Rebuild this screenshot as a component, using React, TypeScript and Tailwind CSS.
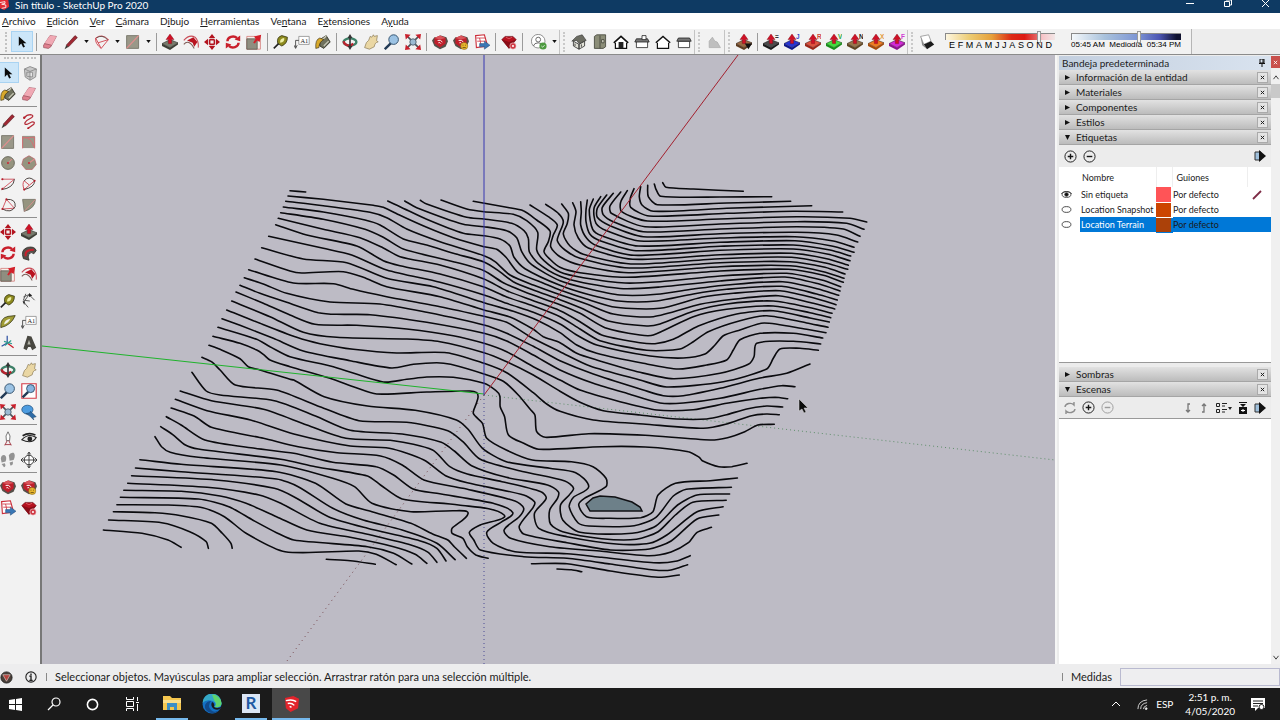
import type { ReactNode } from 'react'

type Point = [number, number]

type Contour = { w?: string; e?: string; s?: string }

const contours: Contour[] = [
  { w: '150,62 197,66' },
  { e: '308,38 318,52 400,57 550,64' },
  { e: '283,42 288,58 302,79 480,81 635,80' },
  { e: '263,46 265,80 292,104 500,99 692,94' },
  { e: '242,50 238,80 246,105 280,124 500,115 755,107' },
  { e: '222,56 211,85 212,112 268,138 500,130 700,124 848,126' },
  { e: '202,62 182,96 185,125 262,153 480,147 710,140 870,145 920,156' },
  { e: '182,66 150,108 154,130 255,170 480,162 710,155 860,160 912,178' },
  { e: '160,70 127,112 130,134 160,155 250,185 480,177 710,170 850,177 900,199' },
  { e: '140,75 112,115 112,142 150,167 250,200 480,191 710,187 830,195 893,216' },
  { e: '122,80 102,115 108,160 140,182 240,213 480,204 705,200 820,213 882,232' },
  { e: '100,87 88,120 98,178 125,197 235,228 480,217 705,212 815,228 882,247' },
  { e: '82,90 78,120 78,155 90,193 120,212 228,242 480,229 700,225 810,240 872,258' },
  { e: '62,95 64,125 62,165 80,205 110,227 222,256 480,241 700,237 805,253 870,272' },
  { e: '38,98 48,125 42,165 55,204 85,234 218,268 480,254 695,250 800,266 865,286' },
  { e: '5,102 25,130 22,160 10,192 30,228 70,253 212,282 480,266 695,262 800,280 863,298' },
  { e: '-43,103 -5,130 10,155 -2,190 -8,212 15,240 60,265 208,294 480,278 690,275 795,292 855,312' },
  { e: '-90,105 -35,140 -8,165 -20,195 -28,230 0,260 60,285 205,308 480,290 690,287 790,305 852,325' },
  { w: '700,94 800,112 850,122 890,150 930,183 925,215 912,245 930,268', e: '0,292 60,308 200,322 480,303 685,298 790,316 850,337' },
  { w: '603,90 680,117 732,125 820,133 860,152 893,187 890,240 912,272', e: '0,306 70,323 195,339 300,335 480,318 680,310 785,330 842,350' },
  { w: '541,91 560,102 680,142 732,147 815,160 852,182 865,205 868,245 895,280', e: '0,319 70,338 190,356 300,351 480,333 675,321 780,343 840,363' },
  { w: '494,93 530,113 670,163 732,170 800,182 830,203 845,245 875,284', e: '0,332 80,355 180,375 290,373 400,357 500,345 668,335 775,357 836,376' },
  { w: '443,93 480,110 560,148 670,190 732,197 780,207 810,228 822,262 855,296', e: '0,346 80,372 175,393 290,393 400,372 500,358 665,349 770,372 832,390' },
  { w: '144,78 250,88 400,106 430,112 480,136 560,172 640,203 732,230 770,238 798,262 835,308', e: '-60,335 0,360 80,387 168,412 300,415 425,382 520,370 660,362 765,385 828,404' },
  { w: '137,94 250,107 390,127 440,143 500,177 600,215 732,257 765,275 810,315', e: '-80,345 0,374 80,402 160,432 280,440 420,403 520,388 655,377 760,400 824,417' },
  { w: '130,111 250,126 375,150 420,165 490,207 560,225 640,250 732,276 775,302 820,335', e: '-80,360 0,389 70,417 145,453 260,468 300,462 400,424 500,402 640,393 755,414 816,430' },
  { w: '122,128 250,148 375,178 430,202 490,237 640,275 732,302 790,338', e: '-100,368 0,404 60,430 135,473 240,495 280,495 400,440 500,418 640,408 750,428 812,443' },
  { w: '115,145 250,178 360,203 430,234 480,260 600,285 732,327 800,362', e: '-80,392 0,422 60,455 125,495 240,518 285,521 340,508 415,468 530,432 640,422 750,444 808,456' },
  { w: '107,164 200,195 350,228 430,272 480,287 600,312 732,351 800,381', e: '-80,408 0,440 60,477 120,512 260,541 360,537 400,515 445,485 540,452 620,437 740,459 804,472' },
  { w: '86,199 250,235 335,255 440,300 600,337 732,375 800,400', e: '-80,427 0,462 50,495 110,525 270,558 370,564 435,552 465,525 490,497 540,480 612,459 740,478 798,488' },
  { w: '65,233 190,267 320,278 440,325 580,350 732,398 820,424', e: '-70,450 0,488 50,525 110,550 250,580 355,597 440,585 500,570 520,540 540,509 600,490 700,490 788,504' },
  { w: '45,267 150,303 185,309 310,305 370,322 440,350 600,380 732,420 810,441', e: '-80,478 -50,500 0,518 50,550 110,570 240,607 340,626 480,610 565,583 582,560 590,520 700,514 782,522' },
  { w: '26,299 160,339 280,341 340,358 440,380 600,410 732,439 800,457', e: '-90,500 0,545 90,588 240,630 320,651 490,635 620,597 640,565 660,537 720,535 775,541' },
  { w: '13,323 70,342 140,370 270,396 420,402 560,427 732,465 800,490', e: '-80,529 0,572 100,612 250,660 310,677 370,677 480,655 600,624 680,610 750,582' },
  { w: '0,346 60,370 140,397 235,428 290,433 390,434 560,457 732,490 800,513', e: '-80,555 0,600 100,640 200,670 300,699 370,699 480,685 600,658 665,647 705,650' },
  { w: '-12,366 70,400 150,435 225,463 350,466 500,477 640,497 732,520 800,545', e: '-80,590 0,630 60,660 180,695 290,720 400,719 500,700 600,685 645,682 683,686' },
  { w: '-25,393 90,440 190,487 290,502 500,507 600,515 732,548 800,575', e: '-80,615 0,664 60,697 130,722 240,735 350,747 440,747 500,734 560,717 620,708 668,711' },
  { w: '-40,420 60,460 170,502 240,521 340,538 470,549 620,548 732,580 800,608', e: '-80,668 -40,702 0,724 100,750 250,762 430,775 500,762 575,737 620,732 658,734' },
  { w: '-54,446 0,466 100,505 190,543 330,572 455,594 520,583 590,578 632,583 732,612 790,634 835,675', s: '1015,118 1026,135 1030,185 1050,202 1150,191 1280,196 1430,210 1470,203 1510,185 1540,165 1578,163' },
  { w: '-66,472 50,508 90,530 150,560 280,590 430,636 500,628 560,621 640,622 732,640 768,662', s: '945,78 946,110 956,140 965,195 1000,220 1035,238 1180,230 1280,231 1380,245 1405,262 1412,272 1450,290 1480,290 1515,280' },
  { w: '-81,499 0,520 50,540 70,553 90,570 150,590 270,625 340,650 410,672 560,666 690,663 710,668', s: '895,80 891,100 884,130 905,160 915,205 960,240 1020,270 1110,275 1160,290 1190,325 1190,350 1140,385 1127,405 1145,440 1200,445 1270,443 1298,425 1310,375 1350,340 1430,332 1493,324' },
  { w: '-93,526 -60,538 0,566 25,590 60,600 150,628', s: '470,30 540,80 640,108 750,121 845,150 872,178 905,235 960,275 1060,295 1120,308 1150,350 1115,382 1105,410 1125,458 1150,468 1255,467 1305,442 1345,378 1375,358 1479,352' },
  { s: '258,-38 280,-25 300,0 335,45 430,60 530,110 620,152 730,157 825,182 860,215 900,268 1000,305 1095,333 1115,355 1105,375 1085,405 1090,450 1130,487 1250,490 1305,468 1355,405 1400,375 1475,372' },
  { s: '235,7 268,63 300,75 425,92 520,138 600,181 720,192 810,217 840,243 880,287 960,322 1055,345 1080,365 1078,385 1060,420 1062,462 1090,485 1180,506 1260,508 1310,485 1350,435 1390,397 1467,391' },
  { s: '208,63 280,92 400,118 500,165 590,205 700,212 790,240 830,290 870,312 950,335 1040,365 1052,385 1025,430 1035,475 1100,500 1220,523 1290,520 1330,495 1400,425 1460,410' },
  { s: '197,88 270,122 370,150 470,192 600,228 690,235 770,270 820,317 870,338 1000,375 1025,395 1022,412 990,468 1000,492 1100,518 1200,540 1290,537 1340,513 1400,447 1450,435' },
  { s: '187,114 240,138 280,172 400,205 480,230 570,248 670,258 720,285 770,330 860,355 980,393 1000,415 990,440 955,480 970,505 1060,530 1180,544 1290,557 1340,546 1380,518 1400,487 1433,472' },
  { s: '176,140 210,165 265,210 380,235 470,250 560,277 660,290 700,315 745,357 800,370 930,400 975,428 950,455 915,487 930,520 980,545 1100,551 1180,562 1300,578 1350,574 1384,557' },
  { s: '163,170 190,193 220,225 250,237 440,268 520,290 640,318 670,345 720,387 850,405 955,435 900,465 875,487 885,510 900,540 1000,560 1100,565 1200,582 1300,600 1340,600 1378,584' },
  { s: '150,200 165,230 185,247 250,262 440,285 560,325 610,350 650,400 740,425 840,422 872,430 835,475 835,490 860,505 870,530 890,555 918,565' },
  { s: '115,269 210,283 430,305 520,340 590,402 650,425 740,460 790,492 825,510 840,530 868,565' },
  { s: '105,294 210,305 430,327 480,350 560,415 630,450 720,480 800,520 842,569' },
  { s: '96,317 290,330 425,355 470,380 550,440 640,475 760,512 800,535 821,573' },
  { s: '87,340 270,352 390,375 440,400 530,460 640,493 740,525 780,547 800,577' },
  { s: '78,361 210,364 300,378 360,400 430,440 500,480 600,502 700,530 750,553 777,580' },
  { s: '70,382 250,387 320,410 375,450 430,488 470,510 640,530 700,550 742,582' },
  { s: '62,404 180,405 260,413 310,440 360,490 450,545 620,543 660,553 706,584' },
  { s: '54,425 150,428 210,437 280,460 305,490 325,520 328,535' },
  { s: '43,450 165,458 230,485 268,515 273,535' },
  { s: '31,480 120,490 180,510 210,532' },
  { s: '545,568 600,572 658,583' },
  { s: '1018,581 1100,581 1200,603 1310,622 1359,615' },
  { s: '1077,597 1110,599 1134,605' },
]

const parse = (text = ''): Point[] =>
  text ? text.split(' ').map((pair) => pair.split(',').map(Number) as Point) : []

const contourPath = ({ w, e, s }: Contour) => {
  const pts: Point[] = [
    ...parse(w).map(([x, y]): Point => [240 + x / 3, 170 + y / 3]),
    ...parse(e).map(([x, y]): Point => [560 + x / 3, 170 + y / 3]),
    ...parse(s).map(([x, y]): Point => [90 + x / 2.306, 370 + y / 3]),
  ]
  let d = `M${pts[0][0].toFixed(1)} ${pts[0][1].toFixed(1)}`
  for (let i = 0; i < pts.length - 1; i++) {
    const p0 = pts[i - 1] ?? pts[i]
    const p1 = pts[i]
    const p2 = pts[i + 1]
    const p3 = pts[i + 2] ?? p2
    // handles never reach further than a quarter of the segment
    const len = Math.hypot(p2[0] - p1[0], p2[1] - p1[1])
    const handle = (a: Point, b: Point): Point => {
      const dist = Math.hypot(b[0] - a[0], b[1] - a[1]) || 1
      return [((b[0] - a[0]) / dist) * len * 0.25, ((b[1] - a[1]) / dist) * len * 0.25]
    }
    const h1 = handle(p0, p2)
    const h2 = handle(p1, p3)
    const c = [p1[0] + h1[0], p1[1] + h1[1], p2[0] - h2[0], p2[1] - h2[1], p2[0], p2[1]]
    d += `C${c.map((n) => n.toFixed(1)).join(' ')}`
  }
  return d
}

const push = (color: string, dark: string, letter?: string, letterColor?: string) => (
  <>
    <path d="M0 12l10-5 10 4-10 6z" fill={color} stroke="#222" strokeWidth=".6" />
    <path d="M0 12v3l10 5 10-7v-2l-10 6z" fill={dark} />
    <path d="M8 12V7H5l5-7 5 7h-3v5z" fill="#cf1126" stroke="#7c0a16" strokeWidth=".5" />
    {letter && (
      <text x="15" y="6" fontSize="8" fontWeight="700" fontFamily="Liberation Sans, sans-serif" fill={letterColor}>
        {letter}
      </text>
    )}
  </>
)

const gem = (
  <>
    <path d="M1 7l4-4h10l4 4-9 11z" fill="#b5121f" stroke="#5d0810" strokeWidth=".7" />
    <path d="M1 7l9 3 9-3-9 11z" fill="#8a0c17" />
    <path d="M6 4l4 2 4-2" stroke="#e86a72" strokeWidth=".9" fill="none" />
  </>
)

const warehouse = (
  <>
    <path d="M0 8l3-4h3l5-2 7 2 2 5-3 7-7 3-7-4z" fill="#55504a" />
    <path d="M3 5l7-3 7 3v7l-7 5-7-5z" fill="#bf1f2b" />
    <path d="M3 5l7 2 7-2-7-3z" fill="#d9555c" />
    <path d="M7 8q4-1 6 2M8 11q2-1 3 1" stroke="#fff" fill="none" strokeWidth="1.200" />
  </>
)

const icons: Record<string, ReactNode> = {
  select: <path d="M6 3v12l3-3 2.500 5 2.200-1L11.500 11.500H15.500z" fill="#0b0b0b" />,
  eraser: (
    <>
      <path d="M2 14L10 2l8 1-7 13-3 2-6-1z" fill="#e0808f" stroke="#8e4451" strokeWidth=".8" />
      <path d="M10 2l8 1-6 11-9-2z" fill="#f0a9b4" />
      <path d="M3 12l9 2" stroke="#8e4451" strokeWidth=".8" />
    </>
  ),
  pencil: (
    <>
      <path d="M4 14L15 2l3 2.500L7 16z" fill="#a02833" stroke="#521018" strokeWidth=".7" />
      <path d="M4 14l-2 5 5-3z" fill="#3c3732" />
    </>
  ),
  freehand: (
    <>
      <path d="M4 6q3-4 8-4 5 1 1 4-6 3-8 6-1 3 3 2l6-3q4 0 2 3l-7 5" fill="none" stroke="#b52c38" strokeWidth="1.600" />
      <circle cx="4" cy="6" r="1.500" fill="#b51d2b" />
      <circle cx="9" cy="19" r="1.300" fill="#b51d2b" />
    </>
  ),
  arcs: (
    <>
      <path d="M2 5Q10-1 18 7L9 18Q1 12 2 5zM2 5l7 13M5 11L18 7" fill="none" stroke="#d24d58" strokeWidth="1.200" />
      <path d="M3 5Q10 0 17 7" fill="none" stroke="#54433f" />
    </>
  ),
  rect: (
    <>
      <path d="M2 2h15v16H2z" fill="#9a9889" stroke="#6d6c60" />
      <path d="M2 18L17 2" stroke="#e08e8e" strokeWidth="1.600" />
    </>
  ),
  rotrect: (
    <>
      <path d="M2 3h15v14H2z" fill="#9a9889" stroke="#8a8778" />
      <path d="M2 5l15-1v14M2 3v15M4 4q9 1 12 12" stroke="#d46f73" fill="none" strokeWidth="1.200" />
    </>
  ),
  circle: (
    <>
      <circle cx="10" cy="10" r="8" fill="#95947f" stroke="#5d5c50" />
      <path d="M10 10l5-5" stroke="#e28b8e" strokeWidth="1.300" />
      <circle cx="10" cy="10" r="1.300" fill="#c52a37" />
    </>
  ),
  polygon: (
    <>
      <path d="M10 1l7 4 2 7-5 6H6l-5-6 2-7z" fill="#95947f" stroke="#b8666a" />
      <path d="M10 10l7-5" stroke="#e28b8e" strokeWidth="1.300" />
      <circle cx="10" cy="10" r="1.300" fill="#c52a37" />
    </>
  ),
  arc: (
    <>
      <path d="M2 4h16M2 17L18 4" stroke="#cf4956" fill="none" strokeWidth="1.100" />
      <path d="M18 4Q17 15 2 17" stroke="#49413e" fill="none" strokeWidth="1.200" />
      <circle cx="3" cy="4" r="1.300" fill="#b51d2b" />
      <circle cx="3" cy="16" r="1.300" fill="#b51d2b" />
    </>
  ),
  arc2: (
    <>
      <path d="M4 17L17 6M10 11L4 6M4 17q-3-7 0-11" stroke="#cf4956" fill="none" strokeWidth="1.200" />
      <path d="M4 6Q10-1 17 6 17 14 4 17" stroke="#49413e" fill="none" strokeWidth="1.200" />
      <circle cx="4" cy="17" r="1.300" fill="#b51d2b" />
      <circle cx="17" cy="6" r="1.300" fill="#b51d2b" />
    </>
  ),
  arc3: (
    <>
      <path d="M8 3l10 11L3 15z" stroke="#cf4956" fill="none" strokeWidth="1.100" />
      <path d="M8 3q12-1 11 9-5 9-16 3" stroke="#49413e" fill="none" strokeWidth="1.200" />
      <circle cx="8" cy="3" r="1.300" fill="#b51d2b" />
      <circle cx="3" cy="15" r="1.300" fill="#b51d2b" />
    </>
  ),
  pie: (
    <>
      <path d="M2 3h16q0 11-14 15z" fill="#95947f" stroke="#6d6c60" />
      <path d="M18 3L4 18" stroke="#e28b8e" />
    </>
  ),
  push: push('#777a6b', '#3d3f36'),
  move: <path d="M10 0l4 5H6zM10 20l4-5H6zM0 10l5-4v8zM20 10l-5-4v8zM7 6h6v2H7zM7 12h6v2H7zM6 7h2v6H6zM12 7h2v6h-2z" fill="#b3141f" />,
  rotate: (
    <>
      <path d="M3 9a7 6 0 0112-4M17 11a7 6 0 01-12 4" fill="none" stroke="#c9202c" strokeWidth="3" />
      <path d="M12 7l7-5v7zM8 13l-7 5v-7z" fill="#c9202c" />
    </>
  ),
  scale: (
    <>
      <path d="M1 3h17v16H1z" fill="#f8efea" stroke="#d37b78" />
      <path d="M1 6h13v13H1z" fill="#8f8e80" stroke="#5d5c50" />
      <path d="M9 11l3-5-2-3 9-2-2 9-3-2-3 4z" fill="#d3202a" />
    </>
  ),
  offset: (
    <>
      <path d="M1 8Q8 0 15 4q5 5 4 13" stroke="#c94c57" fill="none" strokeWidth="1.300" />
      <path d="M1 13q6-7 13 5" stroke="#7d5a55" fill="none" strokeWidth="1.300" />
      <path d="M5 8l8-4 5 6-4 6-2-5z" fill="#b9121f" />
    </>
  ),
  followme: (
    <>
      <path d="M3 17Q-1 6 8 3q9-2 11 4l-3 4q-3-3-6 0-2 4 0 8z" fill="#55504a" stroke="#2c2926" />
      <path d="M6 14Q4 6 16 6" stroke="#c9202c" strokeWidth="2.600" fill="none" />
    </>
  ),
  tape: (
    <>
      <path d="M6 12Q4 4 11 2l7 2q0 8-7 11z" fill="#8d8a1e" stroke="#34330f" />
      <path d="M9 11q-1-5 5-6 1 5-5 6z" fill="#eeefa5" />
      <path d="M7 12l-6 6" stroke="#222" strokeWidth="2" />
    </>
  ),
  dimension: (
    <>
      <path d="M3 5l7-3 7 7M4 12l5 6M6 1l-3 8 8 1M10 2L3 12" stroke="#565656" strokeWidth="1.200" fill="none" />
      <path d="M10 0l4 3-4 2zM2 10l3 1-1 4z" fill="#222" />
    </>
  ),
  protractor: (
    <>
      <path d="M1 17Q0 5 10 3l9-1Q14 14 1 17z" fill="#a09c35" stroke="#34330f" />
      <path d="M5 13q1-6 8-7-2 5-8 7z" fill="#f2f2e9" />
    </>
  ),
  text: (
    <>
      <path d="M6 3h13v10H6z" fill="#fff" stroke="#8b8b8b" />
      <text x="8" y="11" fontSize="8" fontFamily="Liberation Serif, serif" fill="#222">A1</text>
      <path d="M6 8H2v9M0 14l2 4 2-4" stroke="#333" fill="none" />
    </>
  ),
  axes: (
    <>
      <path d="M9 10V1M9 10L2 14" stroke="#2a4ea0" strokeWidth="1.500" />
      <path d="M9 10l8 6" stroke="#c9202c" strokeWidth="1.600" />
      <path d="M5 8l10 3M6 13l8-6" stroke="#2c9c8e" strokeWidth="1.500" />
    </>
  ),
  text3d: (
    <>
      <path d="M3 17L8 1l5 1 6 14-5 3-2-4H9l-2 4z" fill="#484740" />
      <path d="M8 12l2-6 2 6z" fill="#b8b8ad" />
    </>
  ),
  paint: (
    <>
      <path d="M6 7l8-5 5 8-8 8-5-3z" fill="#6f715e" stroke="#282820" />
      <path d="M6 7q5 0 8-5M11 15l6-6" stroke="#c9c9b8" strokeWidth="1.500" fill="none" />
      <path d="M1 18Q0 7 6 5l5 2q-6 3-6 10z" fill="#d8a92b" stroke="#3b2f10" strokeWidth=".8" />
    </>
  ),
  component: <path d="M3 5l7-3 8 3-1 10-7 4-6-4zM3 5l7 3v11M10 8l8-3M6 9v5l7 1V9z" fill="#c9c9c9" stroke="#8f8f8f" strokeWidth="1.200" />,
  orbit: (
    <>
      <ellipse cx="10" cy="10" rx="8" ry="4.500" fill="none" stroke="#3d8067" strokeWidth="3" />
      <path d="M2 9q1 5 8 6l4-3" fill="none" stroke="#b9222e" strokeWidth="3" />
      <path d="M10 0l3 5h-2v10h2l-3 5-3-5h2V5H7z" fill="#333" />
    </>
  ),
  pan: <path d="M2 17q2-8 5-9l2-5 2 1 2-3 1 2 4-1-1 6 2 2q-4 0-5 6l-6 3z" fill="#ead7a4" stroke="#83714a" strokeWidth=".8" />,
  zoom: (
    <>
      <path d="M9 11l-8 8" stroke="#223a55" strokeWidth="3" />
      <circle cx="12" cy="7" r="6" fill="#9cc3e4" stroke="#35546f" strokeWidth="1.200" />
    </>
  ),
  zoomwin: (
    <>
      <path d="M1 1h18v18H1z" fill="#fff" stroke="#d43a46" strokeWidth="1.400" />
      <path d="M9 11l-7 7" stroke="#223a55" strokeWidth="3" />
      <circle cx="12" cy="7" r="5" fill="#86b4de" stroke="#35546f" strokeWidth="1.200" />
    </>
  ),
  extents: (
    <>
      <path d="M3 3l14 14M17 3L3 17" stroke="#4d5158" strokeWidth="2" />
      <path d="M0 0l7 1-6 6zM20 0l-7 1 6 6zM0 20l7-1-6-6zM20 20l-7-1 6-6z" fill="#c9202c" />
      <circle cx="10" cy="10" r="4" fill="#9bbbd3" stroke="#43525e" />
    </>
  ),
  previous: (
    <>
      <ellipse cx="8" cy="7" rx="7" ry="5.500" fill="#4d9ce0" stroke="#225382" />
      <path d="M12 9l7 7-4 1 1 3-5-5-5-3 5-1z" fill="#2e6ba6" stroke="#173a5d" strokeWidth=".6" />
    </>
  ),
  camera: (
    <>
      <path d="M10 1q-4 5-2 11h4q2-6-2-11z" fill="#fff" stroke="#555" />
      <path d="M9 12l-3 6M11 12l3 6M6 17h8" stroke="#a33f49" strokeWidth="1.200" />
    </>
  ),
  look: (
    <>
      <path d="M1 11q8-9 18-3-5 9-18 3z" fill="#e8e8e8" stroke="#222" strokeWidth="1.400" />
      <circle cx="11" cy="10" r="3" fill="#222" />
      <path d="M2 6q8-5 16-1" stroke="#222" strokeWidth="2" fill="none" />
    </>
  ),
  walk: <path d="M1 8q1-5 5-4 3 2 1 8l-5 1zM2 15l4-1q2 4-1 5zM11 4q2-4 6-3 3 3 0 9l-5 1zM12 13l4-1q1 5-3 5z" fill="#939393" />,
  section: (
    <>
      <circle cx="10" cy="10" r="6" fill="#fff" stroke="#333" strokeWidth="1.200" />
      <path d="M0 10h20M10 1v18M3 7l-3 3 3 3M17 7l3 3-3 3M8 3l2-3 2 3M8 17l2 3 2-3" stroke="#222" fill="none" />
    </>
  ),
  warehouse,
  extensions: (
    <>
      {warehouse}
      <circle cx="14" cy="15" r="4.500" fill="#e7b62d" stroke="#70540f" strokeWidth=".6" />
      <path d="M12 14h1M15 14h1M12 17h4" stroke="#5d440a" />
    </>
  ),
  layout: (
    <>
      <path d="M2 2l11-1 4 14-14 2z" fill="#fff" stroke="#cc2f3b" strokeWidth="1.400" />
      <path d="M3 5h11M7 5l2 10M4 9h11" stroke="#cc2f3b" />
      <path d="M7 12h6V9l7 5-7 5v-3H7z" fill="#3977b5" stroke="#1f4a78" strokeWidth=".6" />
    </>
  ),
  manager: (
    <>
      {gem}
      <circle cx="15" cy="15" r="4" fill="#cf3a45" stroke="#fff" strokeWidth=".6" />
      <circle cx="15" cy="15" r="1.300" fill="#fff" />
    </>
  ),
  account: (
    <>
      <circle cx="9" cy="9" r="8.500" fill="#fff" stroke="#777" />
      <circle cx="9" cy="7" r="3" fill="none" stroke="#666" strokeWidth="1.200" />
      <path d="M3 15q1-4 6-4t6 4" fill="none" stroke="#666" strokeWidth="1.200" />
      <circle cx="15" cy="15" r="4.500" fill="#4c9a3f" />
      <path d="M13 15l1.500 1.500L17 14" stroke="#fff" fill="none" />
    </>
  ),
  iso: (
    <>
      <path d="M3 9l7 4v6l-7-4zM10 13l7-4v6l-7 4z" fill="#e2e2d8" stroke="#2b2b2b" />
      <path d="M1 9l6-6 7-2 5 7-9 4-3-4z" fill="#6c6d63" stroke="#2b2b2b" strokeWidth=".7" />
      <path d="M5 12v3M13 13v3" stroke="#2b2b2b" />
    </>
  ),
  top: (
    <>
      <path d="M3 3l3-2h11v15l-3 2H3z" fill="#8b8d78" stroke="#3e3f35" />
      <path d="M10 2v16M12 7h3v4h-3z" stroke="#3e3f35" fill="#cfd0c0" />
    </>
  ),
  front: (
    <>
      <path d="M3 10v8h14v-8" fill="#fff" stroke="#111" strokeWidth="1.500" />
      <path d="M1 11l9-8 9 8" fill="#fff" stroke="#111" strokeWidth="2" />
      <path d="M7 18v-8h6v8z" fill="#222" />
    </>
  ),
  right: (
    <>
      <path d="M3 9h14v8H3z" fill="#fff" stroke="#222" />
      <path d="M1 10l2-4h14l2 4z" fill="#777" stroke="#222" />
      <path d="M10 2h5v5h-5z" fill="#fff" stroke="#222" />
    </>
  ),
  back: (
    <>
      <path d="M3 10v8h14v-8" fill="#fff" stroke="#111" strokeWidth="1.500" />
      <path d="M1 11l9-8 9 8" fill="#fff" stroke="#111" strokeWidth="1.800" />
    </>
  ),
  left: (
    <>
      <path d="M3 9h14v8H3z" fill="#fff" stroke="#222" />
      <path d="M1 9l2-4h14l2 4z" fill="#777" stroke="#222" />
    </>
  ),
  fog: <path d="M4 17V9l4-5 3 5 3 1 4 7z" fill="#bfbfbf" stroke="#adadad" />,
  jpp: (
    <>
      {push('#9a6a44', '#5d3c21')}
      <path d="M11 12h9l-4.500 7z" fill="#111" />
    </>
  ),
  jpp1: push('#4b4b4b', '#1c1c1c', '=', '#333'),
  jpp2: push('#2735d6', '#0e1789', 'J', '#3342c9'),
  jpp3: push('#e0523f', '#9b2517', 'R', '#d0463a'),
  jpp4: push('#43df3f', '#178e19', 'V', '#28a835'),
  jpp5: push('#98764c', '#5e4523', 'N', '#222'),
  jpp6: push('#ef7c22', '#a44a0a', 'X', '#e39a3c'),
  jpp7: push('#d429d9', '#8c128f', 'F', '#d03ad4'),
  shadow: (
    <>
      <path d="M2 3l10-2 3 8-9 4z" fill="#fff" stroke="#777" strokeWidth=".8" />
      <path d="M6 13l9-4 4 4-9 6z" fill="#1a1a1a" />
      <path d="M2 3l4 10 4 6-6-5z" fill="#888" />
    </>
  ),
}

const Icon = ({ name }: { name: string }) => (
  <svg viewBox="0 0 20 20" className="size-4 shrink-0" aria-hidden="true">
    {icons[name]}
  </svg>
)

const Tool = ({ name, active = false }: { name: string; active?: boolean }) => (
  <button
    aria-label={name}
    className={`flex h-[21px] shrink-0 items-center justify-center ${
      active ? 'w-[22px] border border-[#a9d3f2] bg-[#cce6f9]' : 'w-[21px]'
    }`}
  >
    <Icon name={name} />
  </button>
)

const More = ({ name }: { name: string }) => (
  <button aria-label={name} className="flex w-[10px] shrink-0 items-center justify-center">
    <svg viewBox="0 0 6 4" className="h-[3px] w-[5px]">
      <path d="M0 0h6L3 4z" fill="#111" />
    </svg>
  </button>
)

const Divider = () => (
  <div className="flex w-[6px] shrink-0 justify-center">
    <div className="h-[18px] w-px bg-[#9b9b9b]" />
  </div>
)

const Grip = () => (
  <div className="flex h-6 w-[9px] shrink-0 items-center border-l border-[#c4c4c4]">
    <div className="ml-[3px] h-5 border-l-2 border-dotted border-[#c9c9c9]" />
  </div>
)

const menus: [string, string, string][] = [
  ['', 'A', 'rchivo'],
  ['', 'E', 'dición'],
  ['', 'V', 'er'],
  ['', 'C', 'ámara'],
  ['D', 'i', 'bujo'],
  ['', 'H', 'erramientas'],
  ['Ve', 'n', 'tana'],
  ['E', 'x', 'tensiones'],
  ['A', 'y', 'uda'],
]

const palette: [string, string][][] = [
  [['select', 'component'], ['paint', 'eraser']],
  [['pencil', 'freehand'], ['rect', 'rotrect'], ['circle', 'polygon'], ['arc', 'arc2'], ['arc3', 'pie']],
  [['move', 'push'], ['rotate', 'followme'], ['scale', 'offset']],
  [['tape', 'dimension'], ['protractor', 'text'], ['axes', 'text3d']],
  [['orbit', 'pan'], ['zoom', 'zoomwin'], ['extents', 'previous']],
  [['camera', 'look'], ['walk', 'section']],
  [['warehouse', 'extensions'], ['layout', 'manager']],
]

const tags = [
  { name: 'Sin etiqueta', color: 'bg-[#ff5457]', visible: true, current: true, selected: false },
  { name: 'Location Snapshot', color: 'bg-[#cc4500]', visible: false, current: false, selected: false },
  { name: 'Location Terrain', color: 'bg-[#ab4109]', visible: false, current: false, selected: true },
]

const TitleBar = () => (
  <header className="flex h-[13px] shrink-0 items-start bg-[#0e3a63] text-white">
    <svg viewBox="0 0 12 12" className="h-[10px] w-[10px]">
      <path d="M0 0h10l1 8-6 4-5-2z" fill="#e32b33" />
      <path d="M0 3l6-1v2L2 5l5 1v3l-5 1" stroke="#fff" fill="none" />
    </svg>
    <h1 className="ml-[5px] text-[10px] leading-[11px]">Sin título - SketchUp Pro 2020</h1>
    <div className="mr-2 ml-auto flex gap-[26px]">
      <button aria-label="Minimizar" className="h-[10px] w-3">
        <svg viewBox="0 0 12 10" className="h-[10px] w-3"><path d="M2 3.500h8" stroke="#fff" /></svg>
      </button>
      <button aria-label="Restaurar" className="h-[10px] w-3">
        <svg viewBox="0 0 12 10" className="h-[10px] w-3"><path d="M2.500 1.500h5v5h-5zM4 0h5.500v5H8" stroke="#fff" fill="none" /></svg>
      </button>
      <button aria-label="Cerrar" className="h-[10px] w-3">
        <svg viewBox="0 0 12 10" className="h-[10px] w-3"><path d="M2 0l7 7M9 0L2 7" stroke="#fff" fill="none" /></svg>
      </button>
    </div>
  </header>
)

const MenuBar = () => (
  <nav className="flex h-4 shrink-0 items-center gap-[11px] bg-white pl-[2px] text-[10px] leading-4 text-[#1b1b1b]">
    {menus.map(([before, key, after]) => (
      <button key={before + key + after}>
        {before}
        <span className="underline">{key}</span>
        {after}
      </button>
    ))}
  </nav>
)

const sliderClass =
  'block h-[7px] w-full appearance-none border-t border-l border-[#8a8a8a] [&::-webkit-slider-thumb]:h-3 [&::-webkit-slider-thumb]:w-1 [&::-webkit-slider-thumb]:appearance-none [&::-webkit-slider-thumb]:border [&::-webkit-slider-thumb]:border-[#9a9a9a] [&::-webkit-slider-thumb]:bg-[#f4f4f4]'

const ToolBar = () => (
  <div className="flex h-[26px] shrink-0 items-center overflow-hidden border-b border-[#8b8b8b] bg-[#f2f2f2]">
    <div className="flex h-5 w-[11px] shrink-0 justify-center">
      <div className="border-l-2 border-dotted border-[#c2c2c2]" />
    </div>
    <Tool name="select" active />
    <Divider />
    <Tool name="eraser" />
    <Tool name="pencil" />
    <More name="Líneas" />
    <Tool name="arcs" />
    <More name="Arcos" />
    <Tool name="rect" />
    <More name="Formas" />
    <Divider />
    {['push', 'offset', 'move', 'rotate', 'scale'].map((name) => <Tool key={name} name={name} />)}
    <Divider />
    {['tape', 'text', 'paint'].map((name) => <Tool key={name} name={name} />)}
    <Divider />
    {['orbit', 'pan', 'zoom', 'extents'].map((name) => <Tool key={name} name={name} />)}
    <Divider />
    {['warehouse', 'extensions', 'layout'].map((name) => <Tool key={name} name={name} />)}
    <Divider />
    <Tool name="manager" />
    <Divider />
    <div className="w-[3px] shrink-0" />
    <Tool name="account" />
    <More name="Cuenta" />
    <Grip />
    {['iso', 'top', 'front', 'right', 'back', 'left'].map((name) => <Tool key={name} name={name} />)}
    <Grip />
    <Tool name="fog" />
    <Grip />
    <Tool name="jpp" />
    <Divider />
    {['jpp1', 'jpp2', 'jpp3', 'jpp4', 'jpp5', 'jpp6', 'jpp7'].map((name) => <Tool key={name} name={name} />)}
    <Grip />
    <Tool name="shadow" />
    <label className="ml-2 w-[110px] shrink-0 font-['Liberation_Sans',sans-serif] text-[9px] leading-[10px] text-black">
      <input
        type="range"
        min="0"
        max="100"
        defaultValue="87"
        className={`${sliderClass} [background-image:linear-gradient(90deg,#fdf6e0,#eccb72_22%,#e6a03a_42%,#dd2a16_60%,#dd1a14_72%,#e46a6a_84%,#f6c4c8_88%,#f2e6e6)]`}
      />
      <span className="flex justify-between pr-[3px] pl-1">
        {'EFMAMJJASOND'.split('').map((month, i) => <span key={i}>{month}</span>)}
      </span>
    </label>
    <label className="ml-4 w-[110px] shrink-0 font-['Liberation_Sans',sans-serif] text-[8px] leading-[10px] whitespace-nowrap text-black">
      <input
        type="range"
        min="0"
        max="100"
        defaultValue="62"
        className={`${sliderClass} [background-image:linear-gradient(90deg,#f4f8fb,#a9c2dc_30%,#7d95d4_60%,#4c56b4_80%,#101230_96%)]`}
      />
      <span className="flex justify-between">
        <span>05:45 AM</span>
        <span>Mediodía</span>
        <span>05:34 PM</span>
      </span>
    </label>
    <div className="ml-[10px] h-full w-px shrink-0 bg-[#b5b5b5]" />
    <div className="h-full flex-1 bg-[#ededed]" />
  </div>
)

const Palette = () => (
  <aside className="w-[42px] shrink-0 overflow-hidden border-r-2 border-[#777] bg-[#f2f2f2]">
    <div className="mx-1 mt-[2px] mb-[3px] border-t-2 border-dotted border-[#c2c2c2]" />
    {palette.map((rows, i) => (
      <div key={i} className={i === 0 ? '' : 'mr-[3px] mt-[2px] border-t border-[#8f8f8f] pt-[3px]'}>
        {rows.map(([left, right]) => (
          <div key={left} className="-ml-[3px] flex">
            <Tool name={left} active={left === 'select'} />
            <Tool name={right} />
          </div>
        ))}
      </div>
    ))}
  </aside>
)

const Terrain = () => (
  <main className="relative min-w-0 flex-1 bg-[#bdbbc5]">
    <svg viewBox="42 55 1013 609" preserveAspectRatio="xMidYMid slice" className="absolute inset-0 size-full" role="img" aria-label="Curvas de nivel">
      <g fill="none">
        <path d="M484 395v270" stroke="#4a4a94" strokeDasharray="1 3" />
        <path d="M484 395L284 665" stroke="#77494f" strokeDasharray="1 4" />
        <path d="M484 395l571 65" stroke="#5f8f6b" strokeDasharray="1 3" />
        <g stroke="#0a0a0e" strokeWidth="1.600" strokeLinecap="round">
          {contours.map((contour, i) => <path key={i} d={contourPath(contour)} />)}
        </g>
        <path d="M42 346l442 48" stroke="#1fb32c" />
        <path d="M738 55L484 395" stroke="#a3202e" />
        <path d="M484 55v340" stroke="#3636b0" />
      </g>
      <path d="M586 504l7-6 7-2 15 1 17 5 8 5 2 4h-52z" fill="#6d8089" stroke="#101014" strokeWidth="1.500" />
      <path d="M799 399v12l3-2 2 4 2-1-2-4h4z" fill="#0b0b0b" stroke="#ddd" strokeWidth=".5" />
    </svg>
  </main>
)

const Section = ({ title, open = false }: { title: string; open?: boolean }) => (
  <div className="flex h-[15px] shrink-0 items-center border-b border-[#a5a5a5] bg-linear-to-b from-[#e2e2e2] to-[#bcbcbc] pr-[3px]">
    <button className="flex h-full flex-1 items-center">
      <svg viewBox="0 0 6 6" className="mr-[6px] ml-[6px] size-[5px]">
        <path d={open ? 'M0 0h6L3 6z' : 'M0 0l6 3-6 3z'} fill="#111" />
      </svg>
      <span className="text-[10px] leading-[14px] text-[#1b1b1b]">{title}</span>
    </button>
    <button aria-label={`Cerrar ${title}`} className="flex size-[11px] items-center justify-center border border-[#aaa] bg-[#e4e4e4]">
      <svg viewBox="0 0 6 6" className="size-[5px]"><path d="M1 1l4 4M5 1L1 5" stroke="#222" strokeWidth="1.200" /></svg>
    </button>
  </div>
)

const Round = ({ label, minus = false, dim = false }: { label: string; minus?: boolean; dim?: boolean }) => (
  <button aria-label={label} className={dim ? 'text-[#9b9b9b]' : 'text-[#161616]'}>
    <svg viewBox="0 0 14 14" className="size-[13px]" fill="none" stroke="currentColor">
      <circle cx="7" cy="7" r="6" />
      <path d={minus ? 'M4 7h6' : 'M4 7h6M7 4v6'} strokeWidth="1.500" />
    </svg>
  </button>
)

const Details = () => (
  <button aria-label="Detalles">
    <svg viewBox="0 0 12 12" className="size-3">
      <path d="M1 2h6v8H1z" fill="#9fc0dc" stroke="#333" />
      <path d="M5 0l7 6-7 6z" fill="#111" />
    </svg>
  </button>
)

const Eye = ({ on }: { on: boolean }) => (
  <svg viewBox="0 0 12 8" className="ml-[2px] h-[7px] w-[11px]" fill="#fff" stroke="#333">
    <ellipse cx="6" cy="4" rx="5" ry="3.300" />
    {on && <circle cx="6" cy="4" r="2" fill="#111" />}
    {on && <path d="M0 3q6-5 12 0" fill="none" />}
  </svg>
)

const Tray = () => (
  <aside className="flex w-[225px] shrink-0 border-l-2 border-[#f6f6f6] bg-[#ececec] pt-px pl-[2px]">
    <div className="flex min-w-0 flex-1 flex-col">
      <div className="flex h-[14px] shrink-0 items-center bg-linear-to-r from-[#c3cfdf] to-[#d9e3ef] pr-[5px] pl-[3px]">
        <h2 className="text-[10px] leading-3 text-[#222]">Bandeja predeterminada</h2>
        <svg viewBox="0 0 8 8" className="ml-auto size-2"><path d="M2 0h4v4H2zM1 4.500h6M4 5v3M5 0v4" stroke="#111" fill="none" /></svg>
      </div>
      <Section title="Información de la entidad" />
      <Section title="Materiales" />
      <Section title="Componentes" />
      <Section title="Estilos" />
      <Section title="Etiquetas" open />
      <div className="flex h-[22px] shrink-0 items-center gap-[6px] px-[5px]">
        <Round label="Añadir etiqueta" />
        <Round label="Eliminar etiqueta" minus />
        <span className="flex-1" />
        <Details />
      </div>
      <div className="h-[196px] shrink-0 border-b border-[#999] bg-white">
        <table className="w-full table-fixed text-left text-[9px] leading-[15px] text-[#1b1b1b]">
          <colgroup>
            <col className="w-[21px]" />
            <col className="w-[76px]" />
            <col className="w-[16px]" />
            <col />
            <col className="w-[24px]" />
          </colgroup>
          <thead>
            <tr className="h-5">
              <th />
              <th className="border-r border-[#eee] pl-[2px] font-normal">Nombre</th>
              <th className="border-r border-[#eee]" />
              <th className="border-r border-[#eee] pl-1 font-normal">Guiones</th>
              <th />
            </tr>
          </thead>
          <tbody>
            {tags.map((tag) => (
              <tr key={tag.name} className="h-[15px]">
                <td><Eye on={tag.visible} /></td>
                <td className={`pl-px whitespace-nowrap ${tag.selected ? 'bg-[#0078d7] text-white' : ''}`}>{tag.name}</td>
                <td className={`border-r-2 border-b ${tag.selected ? 'border-[#0078d7]' : 'border-white'} ${tag.color}`} />
                <td className={tag.selected ? 'bg-[#0078d7]' : ''}>Por defecto</td>
                <td className={tag.selected ? 'bg-[#0078d7]' : ''}>
                  {tag.current && <svg viewBox="0 0 10 10" className="ml-[5px] size-[10px]"><path d="M1 9l8-8" stroke="#7d2b45" strokeWidth="1.800" /></svg>}
                </td>
              </tr>
            ))}
          </tbody>
        </table>
      </div>
      <div className="h-1 shrink-0" />
      <Section title="Sombras" />
      <Section title="Escenas" open />
      <div className="flex h-[22px] shrink-0 items-center gap-[6px] border-b border-[#999] px-[5px]">
        <button aria-label="Actualizar escena">
          <svg viewBox="0 0 12 12" className="size-3" fill="none" stroke="#8d8d8d" strokeWidth="1.400">
            <path d="M1 5a5 4 0 019-2V0M11 7a5 4 0 01-9 2v3" />
          </svg>
        </button>
        <Round label="Añadir escena" />
        <Round label="Eliminar escena" minus dim />
        <span className="flex-1" />
        <button aria-label="Bajar"><svg viewBox="0 0 10 10" className="size-[10px]" fill="none" stroke="#777" strokeWidth="1.300"><path d="M7 1H5v8M3 7l2 2 2-2" /></svg></button>
        <button aria-label="Subir"><svg viewBox="0 0 10 10" className="size-[10px]" fill="none" stroke="#777" strokeWidth="1.300"><path d="M3 9h2V1M3 3l2-2 2 2" /></svg></button>
        <button aria-label="Vista"><svg viewBox="0 0 17 12" className="h-3 w-[17px]" fill="none" stroke="#222"><path d="M1.500 1.500h3v3h-3zM1.500 7.500h3v3h-3zM7 1.500h5M7 4h3M7 7.500h5M7 10h3" /><path d="M13 5h4l-2 3z" fill="#222" stroke="none" /></svg></button>
        <button aria-label="Mostrar detalles"><svg viewBox="0 0 10 12" className="h-3 w-[10px]"><path d="M1 0h8v1H1zM2 2h6L5 5zM1 5h8v7H1z" fill="#111" /><path d="M3 8.500h4M5 7v3" stroke="#fff" /></svg></button>
        <Details />
      </div>
      <div className="flex-1 bg-white" />
    </div>
    <div className="flex w-[9px] shrink-0 flex-col items-center bg-[#f0f0f0]">
      <button aria-label="Cerrar bandeja" className="flex h-3 w-full items-center justify-center bg-[#c9504c]">
        <svg viewBox="0 0 6 6" className="size-[5px]"><path d="M1 1l4 4M5 1L1 5" stroke="#fff" /></svg>
      </button>
      <svg viewBox="0 0 8 6" className="mt-[7px] h-[5px] w-2"><path d="M1 5l3-4 3 4" stroke="#444" strokeWidth="1.200" fill="none" /></svg>
      <div className="mt-1 h-[14px] w-full bg-[#c9c9c9]" />
      <svg viewBox="0 0 8 6" className="mt-auto mb-1 h-[5px] w-2"><path d="M1 1l3 4 3-4" stroke="#444" strokeWidth="1.200" fill="none" /></svg>
    </div>
  </aside>
)

const StatusBar = () => (
  <footer className="flex h-6 shrink-0 items-center bg-[#ededee] pt-[2px] text-[11px] text-[#1b1b1b]">
    <svg viewBox="0 0 14 14" className="size-[13px]">
      <circle cx="7" cy="7" r="6" fill="#4a3f38" stroke="#222" />
      <path d="M3 4h8l-4 7z" fill="#b5433d" stroke="#ddd" strokeWidth=".6" />
    </svg>
    <svg viewBox="0 0 14 14" className="ml-3 size-3">
      <circle cx="7" cy="7" r="6" fill="none" stroke="#222" strokeWidth="1.300" />
      <path d="M7 3v2M5 6h2v5M5 11h4" stroke="#222" strokeWidth="1.600" fill="none" />
    </svg>
    <div className="mr-2 ml-[9px] h-2 w-px bg-[#888]" />
    <p>Seleccionar objetos. Mayúsculas para ampliar selección. Arrastrar ratón para una selección múltiple.</p>
    <div className="ml-auto h-2 w-px bg-[#888]" />
    <label htmlFor="medidas" className="mr-2 ml-2">Medidas</label>
    <input id="medidas" className="h-[18px] w-40 border border-[#b9bad0] bg-[#eeeef0] px-1" />
  </footer>
)

const TaskBar = () => (
  <div className="flex h-8 shrink-0 items-center bg-[#1b1b1b] text-white">
    <button aria-label="Inicio" className="flex h-full w-[30px] items-center justify-center">
      <svg viewBox="0 0 13 13" className="size-[13px]"><path d="M0 2l6-1v5H0zM7 1l6-1v6H7zM0 7h6v5l-6-1zM7 7h6v6l-6-1z" fill="#fff" /></svg>
    </button>
    <button aria-label="Buscar" className="flex h-full w-[41px] items-center justify-center pl-[6px]">
      <svg viewBox="0 0 14 14" className="size-[14px]" fill="none" stroke="#fff" strokeWidth="1.200"><circle cx="9" cy="5" r="4" /><path d="M6 8l-5 5" /></svg>
    </button>
    <button aria-label="Cortana" className="flex h-full w-[43px] items-center justify-center">
      <svg viewBox="0 0 14 14" className="size-[13px]"><circle cx="7" cy="7" r="5.500" fill="none" stroke="#fff" strokeWidth="1.700" /></svg>
    </button>
    <button aria-label="Vista de tareas" className="flex h-full w-[42px] items-center justify-center pr-[6px]">
      <svg viewBox="0 0 14 14" className="size-[14px]" fill="none" stroke="#fff"><path d="M1.500 4.500h7v5h-7zM1.500 0v2.500h7V0M1.500 14v-2.500h7V14M12.500 0v4M12.500 7v7M11 5.500h3" /></svg>
    </button>
    <button aria-label="Explorador" className="flex h-full w-8 items-center justify-center border-b-2 border-[#76b9ed]">
      <svg viewBox="0 0 18 16" className="h-4 w-[18px]">
        <path d="M0 1h7l2 2h9v12H0z" fill="#f5c74f" />
        <path d="M0 5h18v3H0z" fill="#fbdf8b" />
        <path d="M4 8h10v7h-3v-3H7v3H4z" fill="#3d8fc6" />
      </svg>
    </button>
    <button aria-label="Edge" className="flex h-full w-[47px] items-center justify-center">
      <svg viewBox="0 0 20 20" className="size-5">
        <circle cx="10" cy="10" r="9.500" fill="#1470c4" />
        <path d="M.5 9A9.500 9.500 0 0119.500 9c0 4-4 5-7 4 2-2 1-5-2-6Q4 5 .5 9z" fill="#35a9c8" />
        <path d="M10 .5a9.500 9.500 0 019.500 8.500c0 4-4 5-7 4 2-2 2-4 0-6Z" fill="#5ed66d" />
        <path d="M9 7q-4 5 0 9t9-1q-3 5-9 4-7-2-6-8 2-4 6-4z" fill="#114a8b" />
        <path d="M10 8q3 1 2 5 3 2 7 0v1q-3 3-7 1-4-3-2-7z" fill="#1b1b1b" />
      </svg>
    </button>
    <button aria-label="Revit" className="flex h-full w-8 items-center justify-center border-b-2 border-[#76b9ed]">
      <span className="flex h-[19px] w-[18px] items-center justify-center bg-[#dbe6f5] text-[17px] leading-[18px] font-bold text-[#1f5aa3]">R</span>
    </button>
    <button aria-label="SketchUp" className="ml-[5px] flex h-full w-[38px] items-center justify-center border-b-2 border-[#76b9ed] bg-[#484848]">
      <svg viewBox="0 0 16 18" className="h-[17px] w-[15px]">
        <path d="M1 3l9-2 6 3-1 10-8 4-5-4z" fill="#e2232b" />
        <path d="M2 6q7-2 11 1M4 9q4-1 7 2M6 12l2 1" stroke="#fff" strokeWidth="1.500" fill="none" />
      </svg>
    </button>
    <div className="ml-auto flex items-center text-[10px]">
      <button aria-label="Iconos ocultos" className="mr-4">
        <svg viewBox="0 0 10 6" className="h-[6px] w-[10px]"><path d="M1 5l4-4 4 4" stroke="#fff" fill="none" /></svg>
      </button>
      <svg viewBox="0 0 12 12" className="mr-2 size-[11px]" fill="none" stroke="#ddd"><path d="M1 11Q1 2 11 1M4 11q0-6 7-7M7 11q0-3 4-4" /><circle cx="10" cy="10.500" r="1" fill="#fff" /></svg>
      <button className="mr-3">ESP</button>
      <div className="mr-4 text-center leading-[14px]">
        <div>2:51 p. m.</div>
        <div>4/05/2020</div>
      </div>
      <button aria-label="Notificaciones" className="mr-[15px]">
        <svg viewBox="0 0 14 14" className="size-[14px]"><path d="M0 1h14v10H7l-3 3v-3H0z" fill="#fff" /><path d="M2 4h10M2 6.500h10M2 9h5" stroke="#222" /><circle cx="10.500" cy="10" r="2.500" fill="#fff" stroke="#222" /></svg>
      </button>
    </div>
  </div>
)

export default function App() {
  return (
    <div className="flex h-screen w-full flex-col overflow-hidden bg-[#f0f0f0] font-['Lato','Open_Sans',sans-serif]">
      <TitleBar />
      <MenuBar />
      <ToolBar />
      <div className="flex min-h-0 flex-1">
        <Palette />
        <Terrain />
        <Tray />
      </div>
      <StatusBar />
      <TaskBar />
    </div>
  )
}
